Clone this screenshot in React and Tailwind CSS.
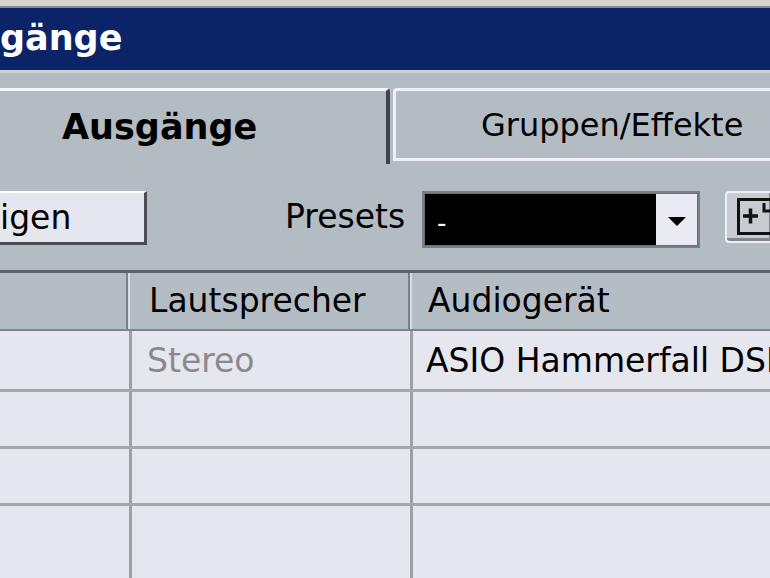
import { useState } from 'react';

const font = { fontFamily: '"DejaVu Sans", Verdana, sans-serif' };

// Add-bus icon: outlined box with a plus and a small corner mark
const AddBusIcon = () => (
  <svg width="40" height="38" viewBox="0 0 40 38" className="shrink-0">
    <rect x="1.5" y="1.5" width="50" height="34" fill="none" stroke="#111" strokeWidth="3" />
    <path d="M6 18h15M13.5 10.5v15" stroke="#111" strokeWidth="3.5" />
    <path d="M27 5v8h6" fill="none" stroke="#111" strokeWidth="3" />
  </svg>
);

const rows = [
  { name: '', speaker: 'Stereo', device: 'ASIO Hammerfall DSP' },
  { name: '', speaker: '', device: '' },
  { name: '', speaker: '', device: '' },
  { name: '', speaker: '', device: '' }
];

const App = () => {
  const [tab, setTab] = useState('out');
  const [preset] = useState('-');

  return (
    <div className="w-[770px] h-[578px] overflow-hidden flex flex-col bg-[#b3bbc3]" style={font}>
      {/* Window chrome */}
      <div className="h-[6px] bg-[#d8d4cc]" />
      <div className="h-[2px] bg-[#7e8a9c]" />
      <div className="h-[62px] bg-[#0b2367] flex items-center">
        <span className="text-white font-bold text-[35px] leading-none -mt-[2px]">gänge</span>
      </div>
      <div className="h-[3px] bg-[#ccd0d4]" />

      {/* Tabs */}
      <div className="pt-[15px] flex h-[91px]">
        <button
          onClick={() => setTab('out')}
          className="w-[390px] h-full flex items-center pl-[62px] border-t-[3px] border-t-[#f4f6f8] border-r-[4px] border-r-[#3e4348] rounded-tr-[4px]"
        >
          <span className="text-[35px] font-bold text-black leading-none">Ausgänge</span>
        </button>
        <div className="w-[3px]" />
        <button
          onClick={() => setTab('fx')}
          className="flex-1 h-[73px] flex items-center pl-[85px] border-t-[3px] border-l-[3px] border-b-[3px] border-[#eef0f3] rounded-tl-[4px]"
        >
          <span className="text-[32px] text-black leading-none whitespace-nowrap">Gruppen/Effekte</span>
        </button>
      </div>

      {/* Toolbar */}
      <div className="h-[106px] flex items-start pt-[27px]">
        <div className="w-[147px] h-[54px] bg-[#e6e6ee] border-t-2 border-t-white border-r-[3px] border-r-[#4a4e54] border-b-[3px] border-b-[#4a4e54] flex items-center">
          <span className="text-[33px] text-black leading-none">igen</span>
        </div>
        <span className="ml-[138px] mt-[9px] text-[33px] text-black leading-none">Presets</span>
        <div className="ml-[17px] w-[278px] h-[57px] border-2 border-[#7a7f86] bg-[#6c7178] flex p-[1px]">
          <div className="flex-1 bg-black flex items-center pl-[12px]">
            <span className="text-white text-[26px] leading-none mt-[6px]">{preset}</span>
          </div>
          <div className="w-[41px] bg-[#eaeaf2] flex items-center justify-center">
            <div className="w-0 h-0 border-l-[9px] border-r-[9px] border-t-[9px] border-l-transparent border-r-transparent border-t-black mt-[4px]" />
          </div>
        </div>
        <div className="ml-[25px] h-[52px] flex-1 bg-[#c7ccd2] border-2 border-[#eef0f3] border-r-0 rounded-l-[4px] shadow-[inset_-1px_-3px_0_#80868c] flex items-center pl-[10px] overflow-hidden">
          <AddBusIcon />
        </div>
      </div>

      {/* Table */}
      <div className="flex-1 flex flex-col overflow-hidden">
        <div className="h-[61px] shrink-0 flex border-t-[3px] border-t-[#5c646c] border-b-2 border-b-[#7c848c] bg-[#b4bcc4]">
          <div className="w-[128px] border-r-2 border-r-[#78808a]" />
          <div className="w-[282px] flex items-center pl-[19px] border-l-2 border-l-[#d8dde2] border-r-2 border-r-[#78808a]">
            <span className="text-[33px] text-black leading-none -mt-[2px]">Lautsprecher</span>
          </div>
          <div className="flex-1 flex items-center pl-[16px] border-l-2 border-l-[#d8dde2]">
            <span className="text-[33px] text-black leading-none whitespace-nowrap -mt-[2px]">Audiogerät</span>
          </div>
        </div>
        {rows.map((row, i) => {
          const last = i === rows.length - 1;
          return (
            <div
              key={i}
              className={`${i === 0 ? 'h-[61px] shrink-0' : last ? 'flex-1' : 'h-[57px] shrink-0'} flex bg-[#e6e6ee] ${last ? '' : 'border-b-[3px] border-b-[#a6a6aa]'}`}
            >
              <div className="w-[132px] border-r-[3px] border-r-[#a0a0a4]">{row.name}</div>
              <div className="w-[281px] border-r-[3px] border-r-[#a0a0a4] flex items-center pl-[15px]">
                <span className="text-[33px] text-[#8a8a8e] leading-none">{row.speaker}</span>
              </div>
              <div className="flex-1 flex items-center pl-[13px] overflow-hidden">
                <span className="text-[33px] text-black leading-none whitespace-nowrap">{row.device}</span>
              </div>
            </div>
          );
        })}
      </div>
      {tab === 'fx' && null}
    </div>
  );
};

export default App;
